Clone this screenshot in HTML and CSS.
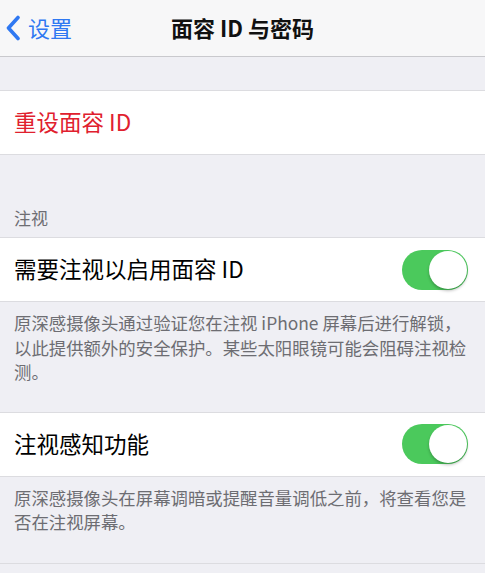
FILE: index.html
```html
<!DOCTYPE html>
<html lang="zh-CN">
<head>
<meta charset="utf-8">
<title>面容 ID 与密码</title>
<link rel="stylesheet" href="styles.css">
</head>
<body>
<header class="nav">
  <a class="back" href="#">
    <svg class="chev" width="16" height="26" viewBox="0 0 16 26"><path d="M13 2.5 L3.5 13 L13 23.5" fill="none" stroke="#2f78f2" stroke-width="3.6" stroke-linecap="round" stroke-linejoin="round"/></svg>
    <span>设置</span>
  </a>
  <h1 class="title">面容 ID 与密码</h1>
</header>

<div class="gap-top"></div>

<div class="row">
  <span class="row-label danger">重设面容 ID</span>
</div>

<div class="section-head">注视</div>

<div class="row">
  <span class="row-label">需要注视以启用面容 ID</span>
  <span class="switch"><span class="knob"></span></span>
</div>
<p class="foot foot-1">原深感摄像头通过验证您在注视 iPhone 屏幕后进行解锁，以此提供额外的安全保护。某些太阳眼镜可能会阻碍注视检测。</p>

<div class="row">
  <span class="row-label">注视感知功能</span>
  <span class="switch"><span class="knob"></span></span>
</div>
<p class="foot foot-2">原深感摄像头在屏幕调暗或提醒音量调低之前，将查看您是否在注视屏幕。</p>

<div class="bottom-line"></div>
</body>
</html>
```

FILE: styles.css
```css
html, body {
  margin: 0;
  padding: 0;
  background: #efeff4;
  font-family: "Noto Sans CJK SC", "Noto Sans", sans-serif;
}

.nav {
  height: 57px;
  box-sizing: border-box;
  padding-bottom: 3px;
  background: #f7f7f8;
  border-bottom: 1px solid #c9c9cd;
  display: flex;
  align-items: center;
  justify-content: center;
  position: relative;
}

.back {
  position: absolute;
  left: 5px;
  top: 15px;
  display: flex;
  align-items: center;
  gap: 7px;
  color: #2f78f2;
  text-decoration: none;
  font-size: 22px;
  line-height: 28px;
}

.back span {
  margin-top: -3px;
}

.chev {
  display: block;
}

.title {
  margin: 0;
  font-size: 22px;
  font-weight: 700;
  color: #111;
  line-height: 28px;
}

.gap-top {
  height: 33px;
}

.row {
  background: #fff;
  border-top: 1px solid #dcdce0;
  border-bottom: 1px solid #dcdce0;
  height: 63px;
  display: flex;
  align-items: center;
  justify-content: space-between;
  padding: 0 17px 0 14px;
}

.row-label {
  font-size: 22.5px;
  color: #000;
  line-height: 30px;
  margin-bottom: 3px;
}

.danger {
  color: #e0202e;
}

.section-head {
  padding: 51px 14px 7px;
  font-size: 17px;
  line-height: 24px;
  color: #6d6d72;
}

.switch {
  width: 66px;
  height: 40px;
  border-radius: 20px;
  background: #4bc95c;
  display: flex;
  align-items: center;
  justify-content: flex-end;
  padding: 0 1px;
  box-sizing: border-box;
}

.knob {
  width: 38px;
  height: 38px;
  border-radius: 50%;
  background: #fff;
  box-shadow: 0 2px 3px rgba(0, 0, 0, 0.25);
}

.foot {
  margin: 0;
  padding: 9px 14px 0;
  font-size: 17.4px;
  line-height: 24.5px;
  color: #6d6d72;
}

.foot-1 {
  padding-bottom: 27px;
}

.foot-2 {
  padding-bottom: 28px;
}

.bottom-line {
  border-top: 1px solid #dcdce0;
}
```
